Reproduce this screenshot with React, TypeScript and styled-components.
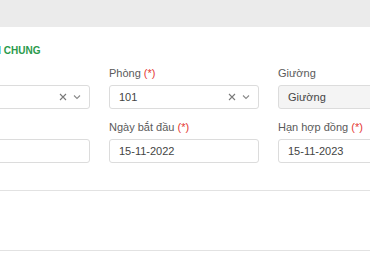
import React from "react";
import styled, { createGlobalStyle } from "styled-components";

const GlobalStyle = createGlobalStyle`
  html, body {
    margin: 0;
    padding: 0;
    background: #ffffff;
    overflow: hidden;
  }
  body {
    font-family: "Liberation Sans", Arial, sans-serif;
    color: #333333;
  }
`;

const TopBar = styled.div`
  height: 27px;
  background: #ebebeb;
`;

const Content = styled.div`
  margin-left: -60px;
  padding-top: 17px;
  width: 520px;
`;

const SectionTitle = styled.div`
  font-size: 10px;
  font-weight: 700;
  line-height: 13px;
  color: #2a9a4b;
  text-transform: uppercase;
  margin-bottom: 9px;
  padding-left: 6px;
`;

const FieldGrid = styled.div`
  display: grid;
  grid-template-columns: repeat(3, 150px);
  column-gap: 19px;
  row-gap: 11px;
`;

const Field = styled.div`
  display: flex;
  flex-direction: column;
  gap: 5px;
`;

const Label = styled.div`
  font-size: 11px;
  line-height: 14px;
  color: #5a5a5a;
  white-space: nowrap;
`;

const Required = styled.span`
  color: #e53935;
`;

const InputBox = styled.div<{ $disabled?: boolean }>`
  box-sizing: border-box;
  height: 24px;
  border: 1px solid #dcdcdc;
  border-radius: 3px;
  background: ${(p) => (p.$disabled ? "#f4f4f4" : "#ffffff")};
  padding: 0 8px 0 9px;
  display: flex;
  align-items: center;
  font-size: 11px;
  color: #444444;
`;

const Value = styled.span`
  flex: 1;
  white-space: nowrap;
`;

const Controls = styled.div`
  display: flex;
  align-items: center;
  gap: 6px;
  color: #8a8a8a;
`;

const Divider = styled.div<{ $top: number }>`
  height: 1px;
  background: #e2e2e2;
  margin-top: ${(p) => p.$top}px;
  width: 370px;
`;

const ClearIcon = () => (
  <svg width="8" height="8" viewBox="0 0 8 8">
    <path d="M1 1 L7 7 M7 1 L1 7" stroke="#7a7a7a" strokeWidth="1.1" />
  </svg>
);

const ChevronIcon = () => (
  <svg width="8" height="6" viewBox="0 0 8 6">
    <path d="M1 1.5 L4 4.5 L7 1.5" stroke="#8a8a8a" strokeWidth="1.1" fill="none" />
  </svg>
);

type FieldProps = {
  label?: string;
  required?: boolean;
  value?: string;
  select?: boolean;
  disabled?: boolean;
};

const FormField = ({ label, required, value, select, disabled }: FieldProps) => (
  <Field>
    <Label>
      {label}
      {required && <Required> (*)</Required>}
    </Label>
    <InputBox $disabled={disabled}>
      <Value>{value}</Value>
      {select && (
        <Controls>
          <ClearIcon />
          <ChevronIcon />
        </Controls>
      )}
    </InputBox>
  </Field>
);

const App = () => {
  return (
    <>
      <GlobalStyle />
      <TopBar />
      <Content>
        <SectionTitle>Thông tin chung</SectionTitle>
        <FieldGrid>
          <FormField label="Nhà" select />
          <FormField label="Phòng" required value="101" select />
          <FormField label="Giường" value="Giường" disabled />
          <FormField label="Ngày ký" />
          <FormField label="Ngày bắt đầu" required value="15-11-2022" />
          <FormField label="Hạn hợp đồng" required value="15-11-2023" />
        </FieldGrid>
      </Content>
      <Divider $top={27} />
      <Divider $top={59} />
    </>
  );
};

export default App;
